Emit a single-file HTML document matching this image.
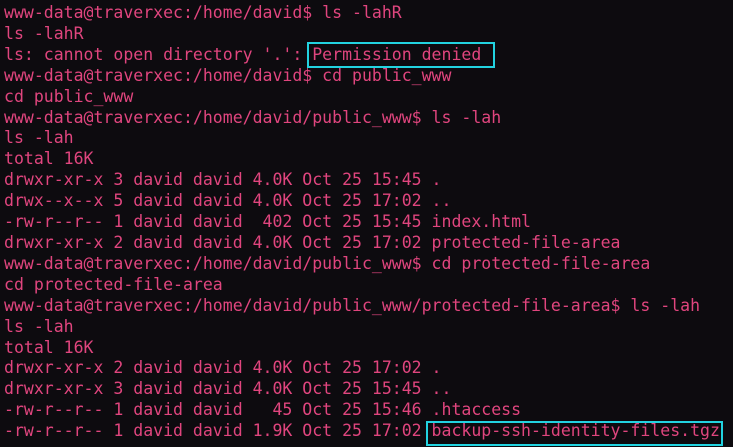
<!DOCTYPE html>
<html><head><style>
body{margin:0;width:733px;height:447px;background:#0d0b0f;overflow:hidden;position:relative}
pre{margin:0;position:absolute;left:4px;top:3px;font-family:"DejaVu Sans Mono",monospace;font-size:16.53px;line-height:20.9px;color:#e0457e}
.b{position:absolute;border:2px solid #22d3e0;box-sizing:border-box}
</style></head><body>
<pre>www-data@traverxec:/home/david$ ls -lahR
ls -lahR
ls: cannot open directory '.': Permission denied
www-data@traverxec:/home/david$ cd public_www
cd public_www
www-data@traverxec:/home/david/public_www$ ls -lah
ls -lah
total 16K
drwxr-xr-x 3 david david 4.0K Oct 25 15:45 .
drwx--x--x 5 david david 4.0K Oct 25 17:02 ..
-rw-r--r-- 1 david david  402 Oct 25 15:45 index.html
drwxr-xr-x 2 david david 4.0K Oct 25 17:02 protected-file-area
www-data@traverxec:/home/david/public_www$ cd protected-file-area
cd protected-file-area
www-data@traverxec:/home/david/public_www/protected-file-area$ ls -lah
ls -lah
total 16K
drwxr-xr-x 2 david david 4.0K Oct 25 17:02 .
drwxr-xr-x 3 david david 4.0K Oct 25 15:45 ..
-rw-r--r-- 1 david david   45 Oct 25 15:46 .htaccess
-rw-r--r-- 1 david david 1.9K Oct 25 17:02 backup-ssh-identity-files.tgz</pre>
<div class="b" style="left:307px;top:42px;width:188px;height:26px"></div>
<div class="b" style="left:426px;top:421px;width:297px;height:25px"></div>
</body></html>
